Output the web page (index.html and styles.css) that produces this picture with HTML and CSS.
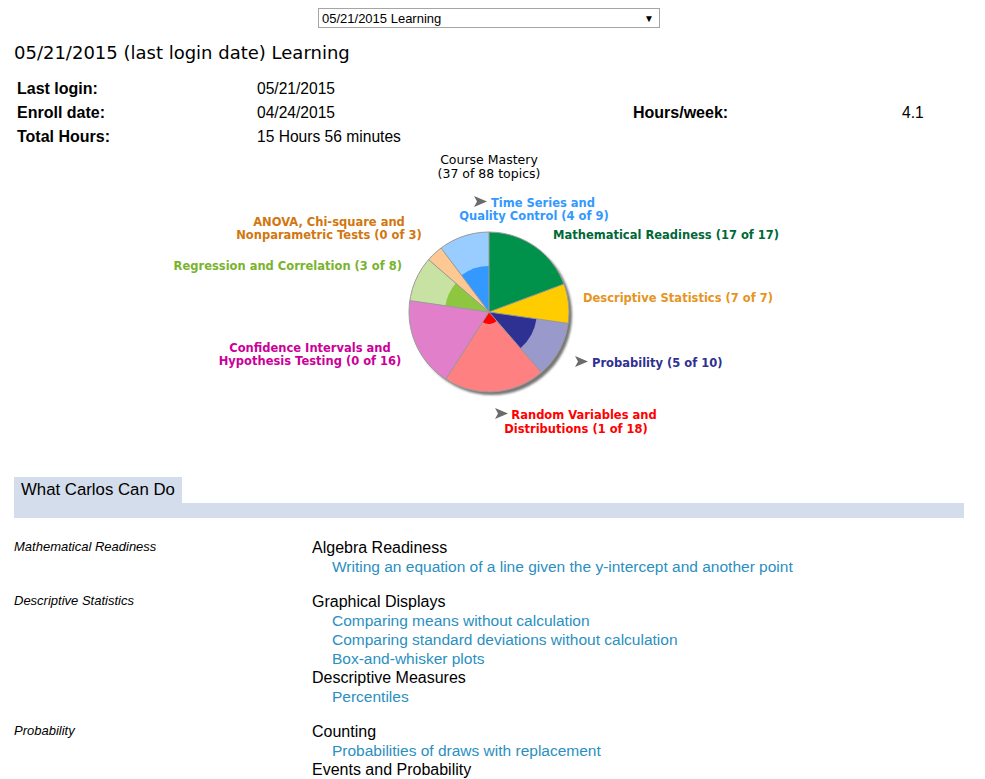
FILE: index.html
```html
<!DOCTYPE html>
<html>
<head>
    <meta charset="utf-8">
    <title>Learning Report</title>
    <link rel="stylesheet" href="styles.css">
</head>
<body>

<div class="page">
    <div class="picker">
        <div class="select-box">
            <span>05/21/2015 Learning</span>
            <span class="caret">&#9660;</span>
        </div>
    </div>

    <h1 class="report-title">05/21/2015 (last login date) Learning</h1>

    <div class="summary">
        <div class="lbl">Last login:</div>
        <div>05/21/2015</div>
        <div></div>
        <div></div>

        <div class="lbl">Enroll date:</div>
        <div>04/24/2015</div>
        <div class="lbl">Hours/week:</div>
        <div>4.1</div>

        <div class="lbl">Total Hours:</div>
        <div>15 Hours 56 minutes</div>
        <div></div>
        <div></div>
    </div>

    <svg class="mastery" width="950" height="300" viewBox="14 148 950 300">
        <defs>
            <filter id="soft" x="-10%" y="-10%" width="120%" height="120%">
                <feGaussianBlur stdDeviation="1.2"/>
            </filter>
        </defs>

        <text class="chart-title" x="489" y="163">Course Mastery</text>
        <text class="chart-title" x="489" y="177">(37 of 88 topics)</text>

        <!-- pie shadow -->
        <circle cx="492" cy="314" r="80" fill="#777" filter="url(#soft)"/>

        <!-- slices, clockwise from 12 o'clock -->
        <path d="M489,311 L489,231 A80,80 0 0 1 563.96,283.04 Z" fill="#00924a"/>
        <path d="M489,311 L563.96,283.04 A80,80 0 0 1 568.19,322.38 Z" fill="#ffcc00"/>
        <path d="M489,311 L568.19,322.38 A80,80 0 0 1 541.39,371.46 Z" fill="#9999cc"/>
        <path d="M489,311 L541.39,371.46 A80,80 0 0 1 445.75,378.3 Z" fill="#ff8080"/>
        <path d="M489,311 L445.75,378.3 A80,80 0 0 1 409.81,299.62 Z" fill="#e27fcb"/>
        <path d="M489,311 L409.81,299.62 A80,80 0 0 1 428.54,258.61 Z" fill="#c7e2a2"/>
        <path d="M489,311 L428.54,258.61 A80,80 0 0 1 441.06,246.96 Z" fill="#fec893"/>
        <path d="M489,311 L441.06,246.96 A80,80 0 0 1 489,231 Z" fill="#99ccff"/>

        <!-- mastered part of each topic -->
        <path d="M489,311 L536.51,317.83 A48,48 0 0 1 520.43,347.28 Z" fill="#2e3192"/>
        <path d="M489,311 L496.86,320.07 A12,12 0 0 1 482.51,321.1 Z" fill="#ff0000"/>
        <path d="M489,311 L445.45,304.74 A44,44 0 0 1 455.75,282.19 Z" fill="#8dc63f"/>
        <path d="M489,311 L461.43,274.18 A46,46 0 0 1 489,265 Z" fill="#3399ff"/>

        <g class="edges">
            <circle cx="489" cy="311" r="80"/>
            <path d="M489,311 L489,231 M489,311 L563.96,283.04 M489,311 L568.19,322.38 M489,311 L541.39,371.46 M489,311 L445.75,378.3 M489,311 L409.81,299.62 M489,311 L428.54,258.61 M489,311 L441.06,246.96"/>
        </g>

        <!-- pointers -->
        <polygon class="pointer" points="474,195 487,200.5 474,206 477,200.5"/>
        <polygon class="pointer" points="575,355 588,360.5 575,366 578,360.5"/>
        <polygon class="pointer" points="495,407 508,412.5 495,418 498,412.5"/>

        <text class="slice-label mid" x="543" y="206" fill="#3399ff">Time Series and</text>
        <text class="slice-label mid" x="534" y="219" fill="#3399ff">Quality Control (4 of 9)</text>

        <text class="slice-label" x="553" y="238" fill="#006837">Mathematical Readiness (17 of 17)</text>
        <text class="slice-label" x="583" y="301" fill="#e5951e">Descriptive Statistics (7 of 7)</text>
        <text class="slice-label" x="592" y="366" fill="#2e3192">Probability (5 of 10)</text>

        <text class="slice-label mid" x="584" y="418" fill="#ff0000">Random Variables and</text>
        <text class="slice-label mid" x="576" y="432" fill="#ff0000">Distributions (1 of 18)</text>

        <text class="slice-label mid" x="329" y="225" fill="#d2760f">ANOVA, Chi-square and</text>
        <text class="slice-label mid" x="329" y="238" fill="#d2760f">Nonparametric Tests (0 of 3)</text>

        <text class="slice-label end" x="402" y="269" fill="#7ab32e">Regression and Correlation (3 of 8)</text>

        <text class="slice-label mid" x="310" y="351" fill="#cc0099">Confidence Intervals and</text>
        <text class="slice-label mid" x="310" y="364" fill="#cc0099">Hypothesis Testing (0 of 16)</text>
    </svg>

    <div class="tabs">
        <div class="tab">What Carlos Can Do</div>
    </div>
    <div class="tab-bar"></div>

    <div class="skills">
        <div class="group">
            <div class="topic">Mathematical Readiness</div>
            <div>
                <div class="section">Algebra Readiness</div>
                <div class="skill">Writing an equation of a line given the y-intercept and another point</div>
            </div>
        </div>

        <div class="group">
            <div class="topic">Descriptive Statistics</div>
            <div>
                <div class="section">Graphical Displays</div>
                <div class="skill">Comparing means without calculation</div>
                <div class="skill">Comparing standard deviations without calculation</div>
                <div class="skill">Box-and-whisker plots</div>
                <div class="section">Descriptive Measures</div>
                <div class="skill">Percentiles</div>
            </div>
        </div>

        <div class="group">
            <div class="topic">Probability</div>
            <div>
                <div class="section">Counting</div>
                <div class="skill">Probabilities of draws with replacement</div>
                <div class="section">Events and Probability</div>
            </div>
        </div>
    </div>
</div>

</body>
</html>
```

FILE: styles.css
```css
body {
    margin: 0;
    padding: 0;
    overflow: hidden;
    background: #fff;
    color: #000;
    font-family: "Liberation Sans", Arial, sans-serif;
}

.page {
    width: 950px;
    margin-left: 14px;
    padding-top: 8px;
}

.picker {
    display: flex;
    justify-content: center;
}

.select-box {
    width: 342px;
    height: 20px;
    box-sizing: border-box;
    border: 1px solid #a5a5a5;
    display: flex;
    align-items: center;
    justify-content: space-between;
    padding: 0 5px 0 3px;
    font-size: 13px;
}

.caret {
    font-size: 10px;
}

.report-title {
    margin: 14px 0 0;
    font-family: "DejaVu Sans", Verdana, sans-serif;
    font-size: 18px;
    font-weight: normal;
    line-height: 22px;
}

.summary {
    margin-top: 13px;
    padding-left: 3px;
    display: grid;
    grid-template-columns: 240px 376px 269px auto;
    grid-auto-rows: 24px;
    align-items: center;
    font-size: 15.6px;
}

.summary .lbl {
    font-size: 16px;
    font-weight: bold;
}

.mastery {
    display: block;
}

.chart-title {
    font-family: "DejaVu Sans", Verdana, sans-serif;
    font-size: 12.5px;
    text-anchor: middle;
}

.slice-label {
    font-family: "DejaVu Sans", Verdana, sans-serif;
    font-size: 11.5px;
    font-weight: bold;
}

.slice-label.mid {
    text-anchor: middle;
}

.slice-label.end {
    text-anchor: end;
}

.edges {
    fill: none;
    stroke: #9a9a9a;
    stroke-width: 1;
}

.pointer {
    fill: #6b6b6b;
}

.tabs {
    margin-top: 28px;
    display: flex;
}

.tab {
    width: 168px;
    height: 26px;
    box-sizing: border-box;
    padding-left: 7px;
    line-height: 26px;
    font-size: 16.8px;
    background: #d3ddec;
}

.tab-bar {
    height: 15px;
    background: #d3ddec;
}

.skills {
    margin-top: 20px;
}

.group {
    display: grid;
    grid-template-columns: 298px 1fr;
    margin-bottom: 16px;
}

.topic {
    font-size: 13px;
    font-style: italic;
    line-height: 17px;
}

.section {
    font-size: 16px;
    line-height: 19px;
}

.skill {
    padding-left: 20px;
    font-size: 15.5px;
    line-height: 19px;
    color: #2b8fc0;
}
```
